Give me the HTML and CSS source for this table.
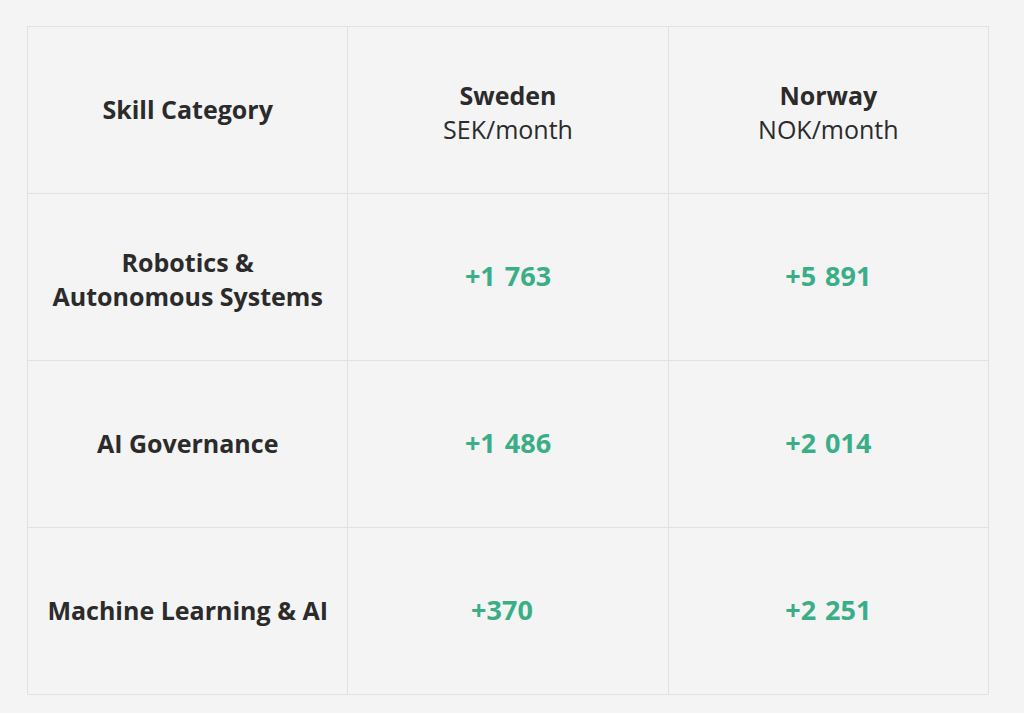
FILE: index.html
```html
<!DOCTYPE html>
<html>
<head>
<meta charset="utf-8">
<link rel="stylesheet" href="styles.css">
</head>
<body>
<div class="page">
  <table class="skills">
    <thead>
      <tr>
        <th class="cat one">Skill Category</th>
        <th class="two"><span class="country">Sweden</span><span class="unit">SEK/month</span></th>
        <th class="two"><span class="country">Norway</span><span class="unit">NOK/month</span></th>
      </tr>
    </thead>
    <tbody>
      <tr>
        <td class="cat two">Robotics &amp;<br>Autonomous Systems</td>
        <td class="val">+1 763</td>
        <td class="val">+5 891</td>
      </tr>
      <tr>
        <td class="cat one">AI Governance</td>
        <td class="val">+1 486</td>
        <td class="val">+2 014</td>
      </tr>
      <tr>
        <td class="cat one">Machine Learning &amp; AI</td>
        <td class="val short">+370</td>
        <td class="val">+2 251</td>
      </tr>
    </tbody>
  </table>
</div>
</body>
</html>
```

FILE: styles.css
```css
html, body {
  margin: 0;
  padding: 0;
  background: #ffffff;
}
.page {
  background: #f4f4f4;
  height: 713px;
  padding: 26px 0 0 27px;
  box-sizing: border-box;
  font-family: "Open Sans", "Noto Sans", sans-serif;
  color: #2b2b2b;
}
.skills {
  border-collapse: collapse;
  width: 962px;
  table-layout: fixed;
}
.skills th, .skills td {
  border: 1.5px solid #e1e1e1;
  height: 167px;
  padding: 0 8px;
  text-align: center;
  vertical-align: middle;
  box-sizing: border-box;
}
.skills th {
  font-weight: 400;
}
.skills .two {
  padding-top: 4px;
}
.skills .one {
  padding-bottom: 3px;
}
.skills .cat {
  font-weight: 700;
  font-size: 25px;
  line-height: 34px;
}
.country {
  display: block;
  font-weight: 700;
  font-size: 25px;
  line-height: 34px;
}
.unit {
  display: block;
  font-weight: 400;
  font-size: 25px;
  line-height: 34px;
}
.skills .val {
  font-weight: 700;
  font-size: 27px;
  word-spacing: 2px;
  line-height: 34px;
  padding-bottom: 2px;
  color: #3aae86;
}
.skills .short {
  padding-right: 20px;
}
```
